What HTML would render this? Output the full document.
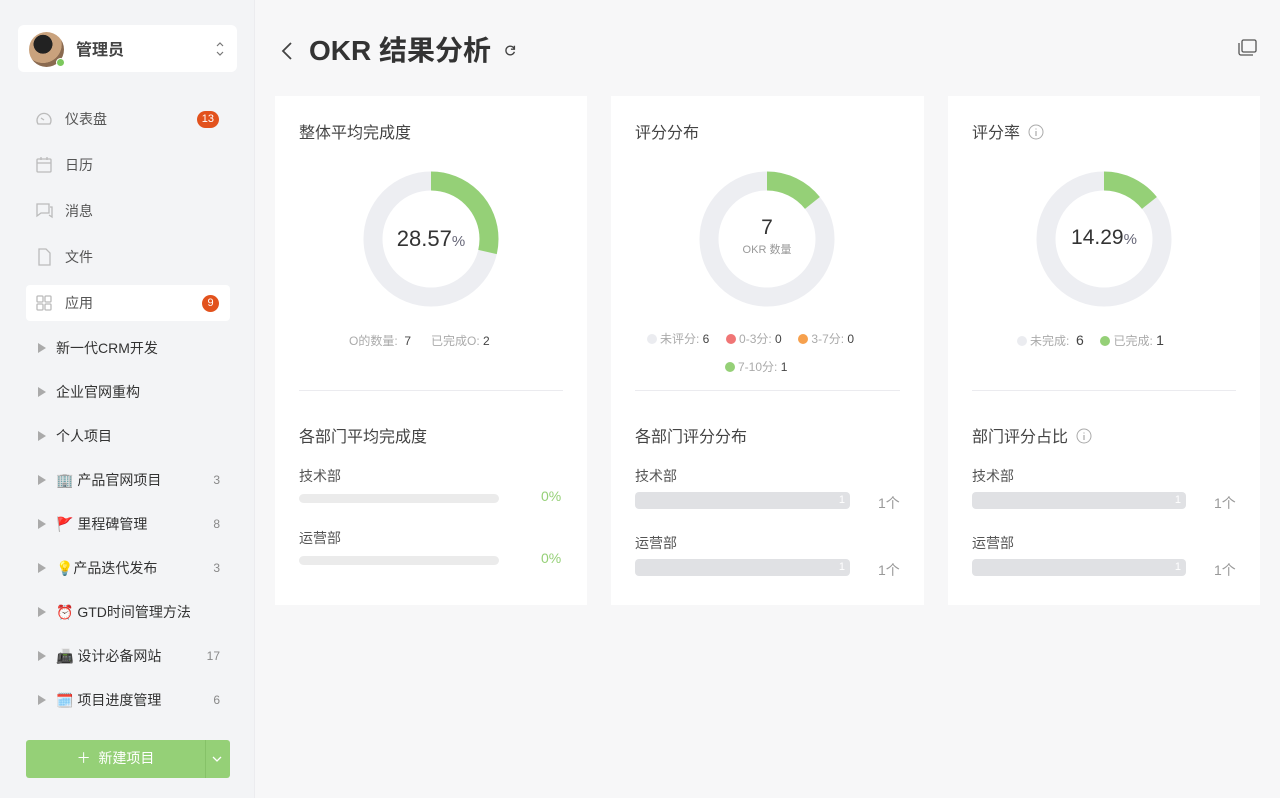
<!DOCTYPE html>
<html><head><meta charset="utf-8">
<style>
*{box-sizing:border-box;margin:0;padding:0}
body{width:1280px;height:798px;overflow:hidden;background:#f7f7f8;font-family:"Liberation Sans","Noto Sans CJK SC",sans-serif;color:#333;position:relative}
.sb{position:absolute;left:0;top:0;width:255px;height:798px;background:#f3f4f6;border-right:1px solid #ececef}
.abs{position:absolute}
.user{left:18px;top:25px;width:219px;height:47px;background:#fff;border-radius:6px}
.nav{left:26px;width:204px;height:36px;display:flex;align-items:center;font-size:14px;color:#555}
.nav svg{margin-left:9px;margin-right:12px}
.badge{position:absolute;right:11px;top:10px;height:17px;min-width:17px;padding:0 5px;border-radius:9px;background:#e2521d;color:#fff;font-size:11px;line-height:17px;text-align:center}
.proj{left:36px;width:184px;height:30px;display:flex;align-items:center;font-size:14px;color:#333}
.tri{width:0;height:0;border-left:8px solid #aaa;border-top:5px solid transparent;border-bottom:5px solid transparent;margin-right:10px;margin-left:2px}
.cnt{position:absolute;right:0;color:#888;font-size:12px}
.card{position:absolute;top:96px;width:312px;height:509px;background:#fff}
.ct{position:absolute;left:24px;font-size:16px;color:#444}
.leg{position:absolute;font-size:12px;color:#aaa;white-space:nowrap}
.leg b{font-weight:normal;color:#444}
.dot{display:inline-block;width:10px;height:10px;border-radius:50%;vertical-align:-1px;margin-right:3px}
.hr{position:absolute;left:24px;right:24px;top:294px;height:1px;background:#ebebef}
.lbl{position:absolute;left:24px;font-size:14px;color:#555}
.bar{position:absolute;left:24px;height:9px;border-radius:5px;background:#ebebeb}
.gbar{position:absolute;left:24px;width:215px;height:17px;border-radius:4px;background:#e0e1e4;color:#fff;font-size:11px;text-align:right;padding-right:5px;line-height:17px}
.num{position:absolute;font-size:14px;color:#999}
</style></head><body>
<div class="sb">
 <div class="abs user">
  <div class="abs" style="left:11px;top:7px;width:35px;height:35px;border-radius:50%;background:radial-gradient(circle at 40% 35%,#222 0 30%,#c9a27d 31% 60%,#8a6a50 61%)"></div>
  <div class="abs" style="left:38px;top:33px;width:9px;height:9px;border-radius:50%;background:#7cc85d;border:1.5px solid #fff"></div>
  <div class="abs" style="left:58px;top:11px;font-size:16px;font-weight:bold;color:#444">管理员</div>
  <svg class="abs" style="left:197px;top:16px" width="10" height="16" viewBox="0 0 10 16"><path d="M2 5l3-3 3 3M2 11l3 3 3-3" fill="none" stroke="#777" stroke-width="1.2"/></svg>
 </div>
 <div class="abs nav" style="top:101px"><svg width="18" height="18" viewBox="0 0 18 18" fill="none" stroke="#bbb" stroke-width="1.3"><path d="M3 14a7 7 0 1 1 12 0z"/><path d="M9 10l-3-2"/></svg>仪表盘<span class="badge">13</span></div>
 <div class="abs nav" style="top:147px"><svg width="18" height="18" viewBox="0 0 18 18" fill="none" stroke="#bbb" stroke-width="1.3"><rect x="2" y="3" width="14" height="13" rx="1"/><path d="M2 7h14M6 1v3M12 1v3"/></svg>日历</div>
 <div class="abs nav" style="top:193px"><svg width="18" height="18" viewBox="0 0 18 18" fill="none" stroke="#bbb" stroke-width="1.3"><path d="M2 2h12v9H6l-4 3z"/><path d="M15 5h2v10l-3-2"/></svg>消息</div>
 <div class="abs nav" style="top:239px"><svg width="18" height="18" viewBox="0 0 18 18" fill="none" stroke="#bbb" stroke-width="1.3"><path d="M4 1h7l4 4v12H4z"/></svg>文件</div>
 <div class="abs nav" style="top:285px;background:#fff;border-radius:4px"><svg width="18" height="18" viewBox="0 0 18 18" fill="none" stroke="#bbb" stroke-width="1.3"><rect x="2" y="2" width="6" height="6" rx="1"/><rect x="10" y="2" width="6" height="6" rx="1"/><rect x="2" y="10" width="6" height="6" rx="1"/><rect x="10" y="10" width="6" height="6" rx="1"/></svg>应用<span class="badge">9</span></div>
 <div class="abs proj" style="top:333px"><span class="tri"></span>新一代CRM开发</div>
 <div class="abs proj" style="top:377px"><span class="tri"></span>企业官网重构</div>
 <div class="abs proj" style="top:421px"><span class="tri"></span>个人项目</div>
 <div class="abs proj" style="top:465px"><span class="tri"></span>🏢 产品官网项目<span class="cnt">3</span></div>
 <div class="abs proj" style="top:509px"><span class="tri"></span>🚩 里程碑管理<span class="cnt">8</span></div>
 <div class="abs proj" style="top:553px"><span class="tri"></span>💡产品迭代发布<span class="cnt">3</span></div>
 <div class="abs proj" style="top:597px"><span class="tri"></span>⏰ GTD时间管理方法</div>
 <div class="abs proj" style="top:641px"><span class="tri"></span>📠 设计必备网站<span class="cnt">17</span></div>
 <div class="abs proj" style="top:685px"><span class="tri"></span>🗓️ 项目进度管理<span class="cnt">6</span></div>
 <div class="abs" style="left:26px;top:740px;width:204px;height:38px;background:#95d077;border-radius:3px;color:#fff;font-size:14px">
  <div class="abs" style="left:0;width:179px;top:8px;text-align:center">＋&nbsp; 新建项目</div>
  <div class="abs" style="left:179px;top:0;width:1px;height:38px;background:#86c268"></div>
  <svg class="abs" style="left:186px;top:15px" width="10" height="8" viewBox="0 0 10 8"><path d="M1 2l4 4 4-4" fill="none" stroke="#fff" stroke-width="1.3"/></svg>
 </div>
</div>

<svg class="abs" style="left:281px;top:41px" width="12" height="20" viewBox="0 0 12 20"><path d="M10 2L2 10l8 8" fill="none" stroke="#444" stroke-width="1.8"/></svg>
<div class="abs" style="left:309px;top:29px;font-size:28px;font-weight:bold;color:#333">OKR 结果分析</div>
<svg class="abs" style="left:504px;top:44px" width="13" height="13" viewBox="0 0 15 15"><path d="M12 6A5 5 0 1 0 12 9" fill="none" stroke="#444" stroke-width="1.6"/><path d="M12 2v4H8" fill="none" stroke="#444" stroke-width="1.6"/></svg>
<svg class="abs" style="left:1238px;top:39px" width="19" height="17" viewBox="0 0 19 17" fill="none" stroke="#555" stroke-width="1.3"><rect x="4" y="1" width="14" height="12" rx="1.5"/><path d="M1 4v10a2 2 0 0 0 2 2h12"/></svg>

<!-- card 1 -->
<div class="card" style="left:275px">
 <div class="ct" style="top:23px">整体平均完成度</div>
 <svg class="abs" style="left:88px;top:75px" width="136" height="136" viewBox="0 0 136 136"><circle cx="68" cy="68" r="58" fill="none" stroke="#edeef2" stroke-width="19"/><circle cx="68" cy="68" r="58" fill="none" stroke="#95d077" stroke-width="19" stroke-dasharray="104.1 400" transform="rotate(-90 68 68)"/></svg>
 <div class="abs" style="left:0;width:312px;top:130px;text-align:center;font-size:22px;color:#333">28.57<span style="font-size:15px;color:#667">%</span></div>
 <div class="leg" style="left:74px;top:236px">O的数量: &nbsp;<b>7</b>&nbsp;&nbsp;&nbsp;&nbsp;&nbsp; 已完成O: <b>2</b></div>
 <div class="hr"></div>
 <div class="ct" style="top:327px">各部门平均完成度</div>
 <div class="lbl" style="top:370px">技术部</div>
 <div class="bar" style="top:398px;width:200px"></div>
 <div class="num" style="left:266px;top:392px;color:#95d077">0%</div>
 <div class="lbl" style="top:432px">运营部</div>
 <div class="bar" style="top:460px;width:200px"></div>
 <div class="num" style="left:266px;top:454px;color:#95d077">0%</div>
</div>

<!-- card 2 -->
<div class="card" style="left:611px;width:313px">
 <div class="ct" style="top:23px">评分分布</div>
 <svg class="abs" style="left:88px;top:75px" width="136" height="136" viewBox="0 0 136 136"><circle cx="68" cy="68" r="58" fill="none" stroke="#edeef2" stroke-width="19"/><circle cx="68" cy="68" r="58" fill="none" stroke="#95d077" stroke-width="19" stroke-dasharray="52.1 400" transform="rotate(-90 68 68)"/></svg>
 <div class="abs" style="left:0;width:312px;top:120px;text-align:center;font-size:21px;color:#333">7</div>
 <div class="abs" style="left:0;width:312px;top:145px;text-align:center;font-size:11px;color:#999">OKR 数量</div>
 <div class="leg" style="left:36px;top:234px"><span class="dot" style="background:#ebecf0"></span>未评分: <b>6</b>&nbsp;&nbsp;&nbsp;&nbsp;&nbsp;<span class="dot" style="background:#f07575"></span>0-3分: <b>0</b>&nbsp;&nbsp;&nbsp;&nbsp;&nbsp;<span class="dot" style="background:#f6a04d"></span>3-7分: <b>0</b></div>
 <div class="leg" style="left:114px;top:262px"><span class="dot" style="background:#95d077"></span>7-10分: <b>1</b></div>
 <div class="hr"></div>
 <div class="ct" style="top:327px">各部门评分分布</div>
 <div class="lbl" style="top:370px">技术部</div>
 <div class="gbar" style="top:396px">1</div>
 <div class="num" style="left:267px;top:397px">1个</div>
 <div class="lbl" style="top:437px">运营部</div>
 <div class="gbar" style="top:463px">1</div>
 <div class="num" style="left:267px;top:464px">1个</div>
</div>

<!-- card 3 -->
<div class="card" style="left:948px">
 <div class="ct" style="top:23px">评分率 <svg width="16" height="16" viewBox="0 0 16 16" style="vertical-align:-2px;margin-left:4px"><circle cx="8" cy="8" r="7" fill="none" stroke="#aaa" stroke-width="1"/><path d="M8 7v5M8 4.5v1" stroke="#aaa" stroke-width="1.2"/></svg></div>
 <svg class="abs" style="left:88px;top:75px" width="136" height="136" viewBox="0 0 136 136"><circle cx="68" cy="68" r="58" fill="none" stroke="#edeef2" stroke-width="19"/><circle cx="68" cy="68" r="58" fill="none" stroke="#95d077" stroke-width="19" stroke-dasharray="52.1 400" transform="rotate(-90 68 68)"/></svg>
 <div class="abs" style="left:0;width:312px;top:130px;text-align:center;font-size:21px;color:#333">14.29<span style="font-size:15px;color:#667">%</span></div>
 <div class="leg" style="left:69px;top:236px"><span class="dot" style="background:#ebecf0"></span>未完成: &nbsp;<b style="font-size:14px">6</b>&nbsp;&nbsp;&nbsp;&nbsp;&nbsp;<span class="dot" style="background:#95d077"></span>已完成: <b style="font-size:14px">1</b></div>
 <div class="hr"></div>
 <div class="ct" style="top:327px">部门评分占比 <svg width="16" height="16" viewBox="0 0 16 16" style="vertical-align:-2px;margin-left:4px"><circle cx="8" cy="8" r="7" fill="none" stroke="#aaa" stroke-width="1"/><path d="M8 7v5M8 4.5v1" stroke="#aaa" stroke-width="1.2"/></svg></div>
 <div class="lbl" style="top:370px">技术部</div>
 <div class="gbar" style="top:396px;width:214px">1</div>
 <div class="num" style="left:266px;top:397px">1个</div>
 <div class="lbl" style="top:437px">运营部</div>
 <div class="gbar" style="top:463px;width:214px">1</div>
 <div class="num" style="left:266px;top:464px">1个</div>
</div>
</body></html>
